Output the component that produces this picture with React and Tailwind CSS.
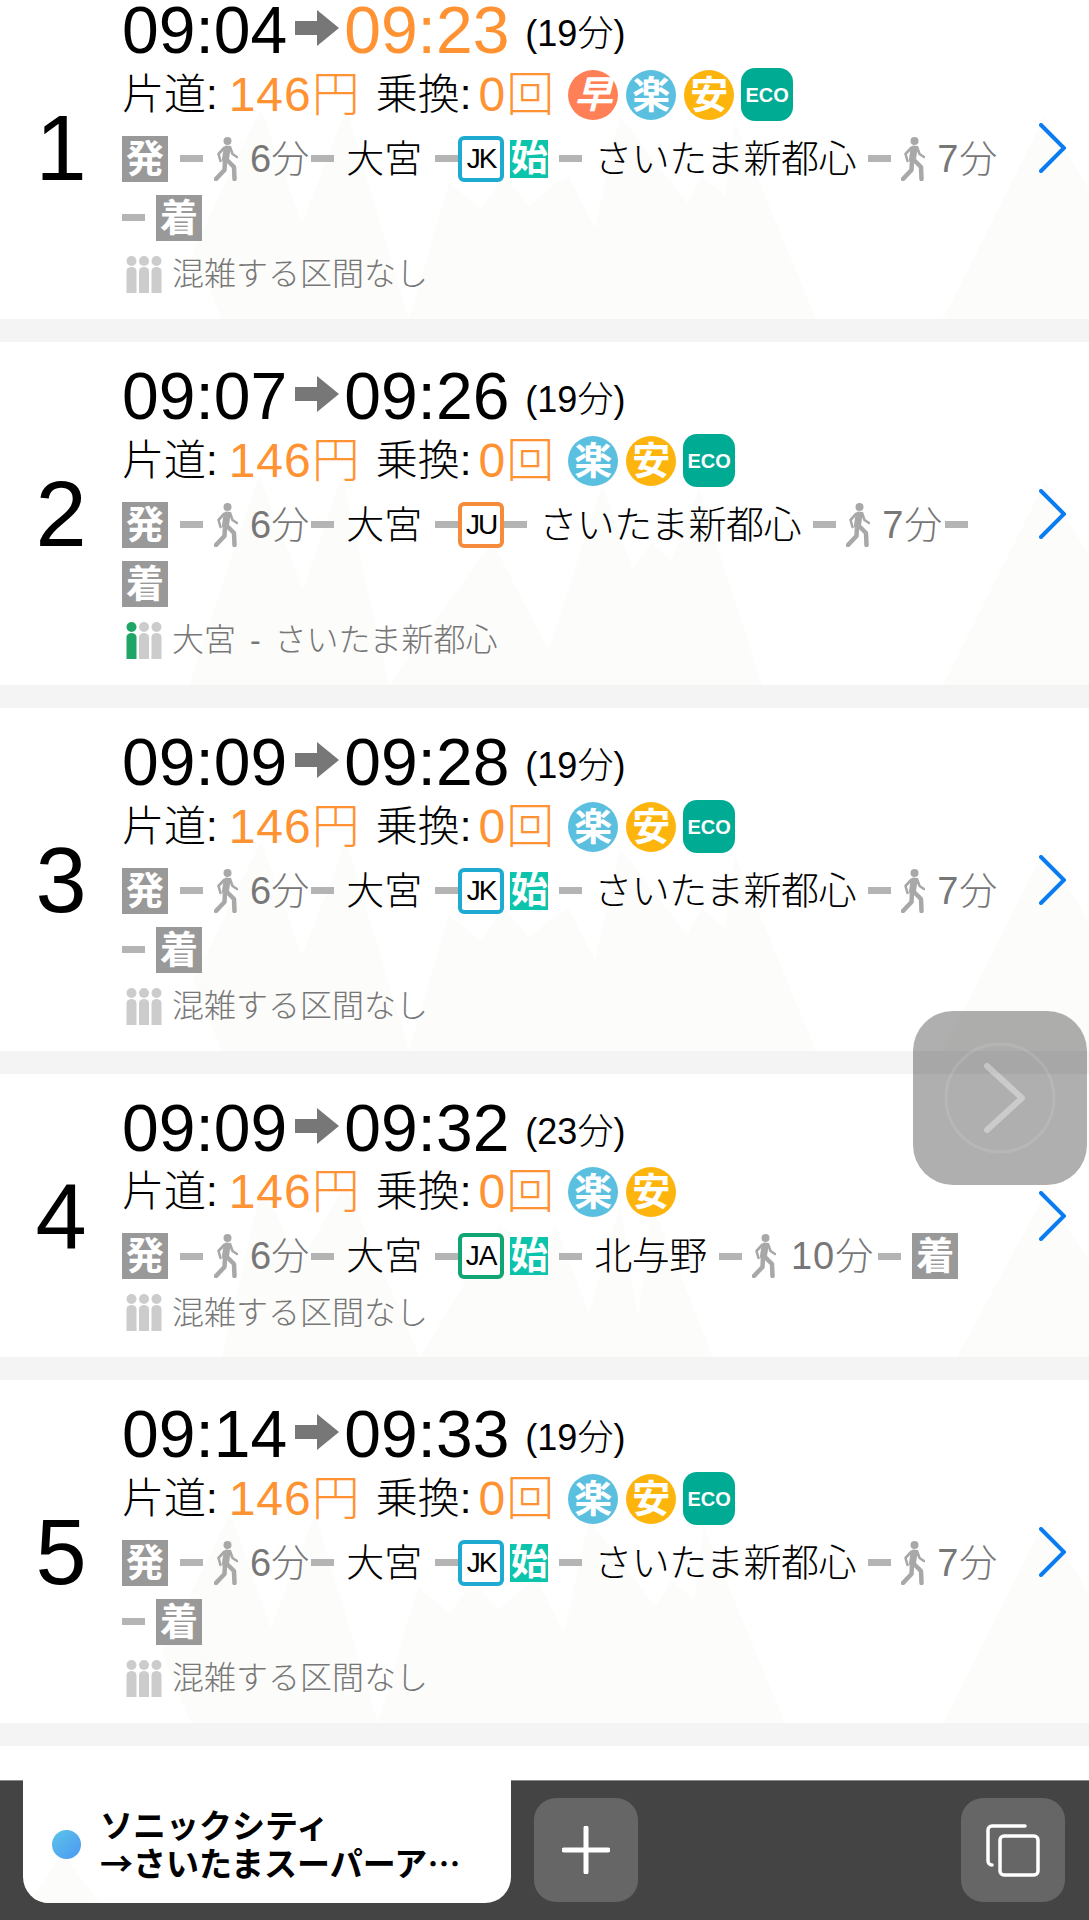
import React from "react";

const FONT = "font-['Liberation_Sans','Noto_Sans_CJK_JP',sans-serif]";

const mountainsA = [
  "222,343 193,274 261,133 302,248 346,133 409,343",
  "409,343 449,207 481,233 504,200 529,230 555,207 569,201 595,253 620,140 687,227 702,200 725,220 735,147 816,343",
  "943,343 1045,140 1089,214 1089,343",
];
const mountainsB = [
  "189,343 259,133 303,247 342,133 389,343",
  "389,343 492,200 549,308 602,143 633,227 652,200 671,220 699,147 762,343",
  "943,343 1045,140 1089,214 1089,343",
];
const mountainsC = [
  "222,283 262,110 300,190 345,110 420,283",
  "420,283 500,150 535,185 555,150 589,240 620,130 638,245 652,130 713,283",
  "957,283 1045,120 1089,187 1089,283",
];
const mountainsD = [
  "191,343 162,274 230,133 271,248 315,133 378,343",
  "378,343 418,207 450,233 473,200 498,230 524,207 538,201 564,253 589,140 656,227 671,200 694,220 704,147 785,343",
  "943,343 1045,140 1089,214 1089,343",
];

const routes = [
  {
    n: "1", from: "09:04", to: "09:23", fast: true, mins: "(19分)", tags: ["早", "楽", "安", "ECO"], mts: mountainsA, tall: true,
    line: "JK", first: true, dest: "さいたま新都心", walk: "7分", crowd: "混雑する区間なし",
  },
  {
    n: "2", from: "09:07", to: "09:26", mins: "(19分)", tags: ["楽", "安", "ECO"], mts: mountainsB, tall: true,
    line: "JU", dest: "さいたま新都心", walk: "7分", crowd: "大宮 - さいたま新都心", crowded: true,
  },
  {
    n: "3", from: "09:09", to: "09:28", mins: "(19分)", tags: ["楽", "安", "ECO"], mts: mountainsA, tall: true,
    line: "JK", first: true, dest: "さいたま新都心", walk: "7分", crowd: "混雑する区間なし",
  },
  {
    n: "4", from: "09:09", to: "09:32", mins: "(23分)", tags: ["楽", "安"], mts: mountainsC,
    line: "JA", first: true, dest: "北与野", walk: "10分", crowd: "混雑する区間なし",
  },
  {
    n: "5", from: "09:14", to: "09:33", mins: "(19分)", tags: ["楽", "安", "ECO"], mts: mountainsD, tall: true,
    line: "JK", first: true, dest: "さいたま新都心", walk: "7分", crowd: "混雑する区間なし",
  },
];

const Dash = ({ className = "" }) => <span className={`block w-[23px] h-[7px] shrink-0 bg-[#b4b4b4] ${className}`} />;

const Walker = () => (
  <svg width="24" height="44" viewBox="0 0 24 44" className="shrink-0" fill="none" stroke="#a8a8a8" strokeLinecap="round" strokeLinejoin="round">
    <circle cx="13.5" cy="4" r="4" fill="#a8a8a8" stroke="none" />
    <path d="M13 12 L11.5 22" strokeWidth="7" />
    <path d="M11 23 L10.5 33 L2 42" strokeWidth="4.5" />
    <path d="M13 23 L20 30 L20.5 42" strokeWidth="4.5" />
    <path d="M10 11 L4.5 17 L6.5 24" strokeWidth="2.6" />
    <path d="M16 10 L18.5 17 L23 20" strokeWidth="2.6" />
  </svg>
);

const Crowd = ({ crowded }) => {
  const first = crowded ? "#1fa667" : "#cccccc";
  return (
    <svg width="36" height="37" viewBox="0 0 36 37" className="shrink-0 ml-[4px]">
      <circle cx="5.5" cy="5" r="5" fill={first} />
      <circle cx="18" cy="5" r="5" fill="#cccccc" />
      <circle cx="30.5" cy="5" r="5" fill="#cccccc" />
      <path d="M0.5 37 V15 a5 4 0 0 1 10 0 V37 Z" fill={first} />
      <path d="M13 37 V15 a5 4 0 0 1 10 0 V37 Z" fill="#cccccc" />
      <path d="M25.5 37 V15 a5 4 0 0 1 10 0 V37 Z" fill="#cccccc" />
    </svg>
  );
};

const Arrow = () => (
  <svg width="44" height="36" viewBox="0 0 44 36" className="shrink-0 self-start mt-[13px] ml-[8px] mr-[5px]">
    <polygon points="0,11 22,11 22,0 44,18 22,36 22,25 0,25" fill="#777777" />
  </svg>
);

const Chevron = () => (
  <svg width="27" height="50" viewBox="0 0 27 50" fill="none" className="shrink-0">
    <path d="M2 2 L25 25 L2 48" stroke="#0a7cf2" strokeWidth="4" strokeLinecap="round" strokeLinejoin="miter" />
  </svg>
);

const Square = ({ children }) => (
  <span className="flex items-center justify-center w-[46px] h-[46px] shrink-0 bg-[#999999] text-white text-[38px] font-bold leading-none">
    {children}
  </span>
);

const LineMark = ({ code }) => {
  const tone =
    code === "JK"
      ? "border-[#1eaad1] tracking-[-2px]"
      : code === "JU"
        ? "border-[#f68b3c] tracking-[-2px]"
        : "border-[#12a574] tracking-[-1px]";
  return (
    <span className={`flex items-center justify-center w-[46px] h-[46px] shrink-0 border-[4px] rounded-md bg-white text-[28px] leading-none ${tone}`}>
      {code}
    </span>
  );
};

const Tag = ({ t }) => {
  if (t === "ECO") {
    return (
      <span className="flex items-center justify-center w-[52px] h-[53px] ml-[-1px] rounded-[14px] bg-[#00ab94] text-white text-[20px] font-bold leading-none">
        ECO
      </span>
    );
  }
  const color = t === "早" ? "bg-[#ff7f56] italic" : t === "楽" ? "bg-[#5bbfe0]" : "bg-[#fdb40c]";
  return (
    <span className={`flex items-center justify-center w-[50px] h-[50px] mr-[8px] rounded-full text-white text-[38px] font-bold leading-none ${color}`}>
      {t}
    </span>
  );
};

const Leg = ({ r }) => (
  <>
    <span className="flex items-center h-[59px]"><Square>発</Square></span>
    <Dash className="ml-[12px]" />
    <span className="ml-[11px]"><Walker /></span>
    <span className="ml-[12px] mr-[2px] text-[#777777]">6分</span>
    <Dash />
    <span className="ml-[12px]">大宮</span>
    <Dash className="ml-[13px]" />
    <LineMark code={r.line} />
    {r.first && (
      <span className="flex items-center justify-center w-[38px] h-[38px] ml-[6px] bg-[#0cc4ab] text-white text-[37px] font-bold leading-none">
        始
      </span>
    )}
    <Dash className={r.first ? "ml-[11px]" : ""} />
    <span className="ml-[12px] tracking-[-0.4px]">{r.dest}</span>
    <Dash className="ml-[12px]" />
    <span className="ml-[10px]"><Walker /></span>
    <span className={`text-[#777777] ${r.walk === "10分" ? "ml-[15px] mr-[4px] tracking-[1px]" : "ml-[12px] mr-[2px] tracking-[1px]"}`}>{r.walk}</span>
    <Dash className="mr-[11px]" />
    <span className="flex items-center h-[59px]"><Square>着</Square></span>
  </>
);

const Route = ({ r }) => (
  <section className={`relative flex items-center bg-white ${r.tall ? "h-[343px]" : "h-[283px]"}`}>
    <svg width="1089" height={r.tall ? 343 : 283} className="absolute left-0 top-0">
      {r.mts.map((p, i) => (
        <polygon key={i} points={p} fill="#fcfcfa" />
      ))}
    </svg>
    <div className="relative w-[122px] shrink-0 text-center text-[92px] leading-none">{r.n}</div>
    <div className="relative w-[898px] shrink-0">
      <div className="flex items-baseline h-[66px] pt-[3px] text-[66px] leading-[66px]">
        <span>{r.from}</span>
        <Arrow />
        <span className={r.fast ? "text-[#ff9233]" : ""}>{r.to}</span>
        <span className="self-start mt-[19px] ml-[16px] text-[36px] leading-none">{r.mins}</span>
      </div>
      <div className="flex items-center h-[69px] text-[42px] leading-none">
        <span>片道:</span>
        <span className="ml-[11px] text-[48px] text-[#ff9233] tracking-[1px]">146円</span>
        <span className="ml-[15px]">乗換:</span>
        <span className="ml-[7px] text-[48px] text-[#ff9233] tracking-[1px]">0回</span>
        <span className="flex items-center ml-[13px]">
          {r.tags.map((t) => (
            <Tag key={t} t={t} />
          ))}
        </span>
      </div>
      <div className={`flex flex-wrap items-center text-[38px] leading-none ${r.tall ? "h-[118px]" : "h-[59px]"}`}>
        <Leg r={r} />
      </div>
      <div className="flex items-center h-[54px] text-[32px] leading-none text-[#777777]">
        <Crowd crowded={r.crowded} />
        <span className="ml-[10px] [word-spacing:5px]">{r.crowd}</span>
      </div>
    </div>
    <div className="relative ml-[19px]">
      <Chevron />
    </div>
  </section>
);

export default function App() {
  return (
    <div className={`relative flex flex-col h-[1920px] w-[1089px] overflow-hidden bg-white text-black font-light ${FONT}`}>
      <div className="flex-1 -mt-[24px] overflow-hidden">
        {routes.map((r) => (
          <div key={r.n} className="border-b-[23px] border-[#f4f4f4]">
            <Route r={r} />
          </div>
        ))}
      </div>

      {/* floating next button */}
      <div className="absolute left-[913px] top-[1011px] flex items-center justify-center w-[174px] h-[174px] rounded-[40px] bg-[#00000050]">
        <svg width="112" height="112" viewBox="0 0 112 112" fill="none">
          <circle cx="56" cy="56" r="54" stroke="#ffffff" strokeOpacity="0.1" strokeWidth="3" />
          <path d="M43 24 L78 56 L43 88" stroke="#ffffff" strokeOpacity="0.35" strokeWidth="6" strokeLinecap="round" strokeLinejoin="round" />
        </svg>
      </div>

      {/* bottom tab bar */}
      <div className="flex h-[140px] shrink-0 bg-[#444444] border-t border-[#8a8a8a]">
        <div className="relative flex items-center w-[488px] h-[123px] -mt-px ml-[23px] rounded-b-[26px] bg-white overflow-hidden">
          <svg width="70" height="50" viewBox="0 0 70 50" className="absolute left-[6px] bottom-0">
            <polygon points="0,50 34,0 70,50" fill="#fcfcfa" />
          </svg>
          <span className="relative ml-[29px] mt-[6px] w-[29px] h-[29px] shrink-0 rounded-full bg-gradient-to-br from-[#5cc4e8] to-[#4d97f2]" />
          <div className="relative ml-[19px] w-[370px] text-[33px] leading-[38px] font-bold font-['Noto_Sans_CJK_JP',sans-serif] mt-[2px]">
            <div>ソニックシティ</div>
            <div className="truncate">→さいたまスーパーアリーナ</div>
          </div>
        </div>
        <div className="flex items-center justify-center w-[104px] h-[104px] mt-[17px] ml-[23px] rounded-[22px] bg-[#666666]">
          <svg width="48" height="48" viewBox="0 0 48 48" fill="none" stroke="#ffffff" strokeWidth="5" strokeLinecap="round">
            <path d="M24 2 V46 M2 24 H46" />
          </svg>
        </div>
        <div className="flex items-center justify-center w-[104px] h-[104px] mt-[17px] ml-[323px] rounded-[22px] bg-[#666666]">
          <svg width="54" height="54" viewBox="0 0 54 54" fill="none" stroke="#ffffff" strokeWidth="3.5" strokeLinecap="round" strokeLinejoin="round">
            <path d="M39 3 H6 a4 4 0 0 0 -4 4 V38 a4 4 0 0 0 4 4" />
            <rect x="14" y="13" width="38" height="39" rx="4" />
          </svg>
        </div>
      </div>
    </div>
  );
}
